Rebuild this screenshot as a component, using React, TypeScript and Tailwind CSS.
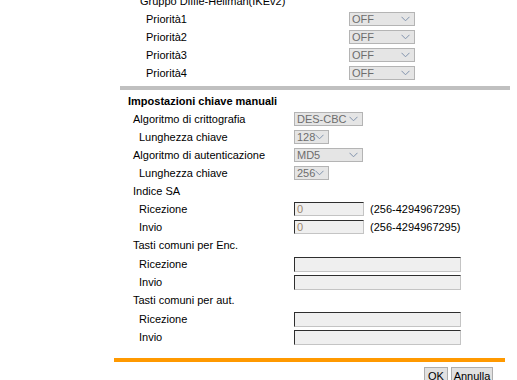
import React from "react";

const Chevron = () => (
  <svg width="9" height="6" viewBox="0 0 9 6" className="shrink-0">
    <polyline points="0.5,0.8 4.5,4.8 8.5,0.8" fill="none" stroke="#8193ad" strokeWidth="1" />
  </svg>
);

const Sel = ({ value, w }: { value: string; w: string }) => (
  <div
    className={`flex h-[14px] items-center justify-between border border-[#b4b4b4] bg-[#e5e5e5] pl-[2px] pr-[4px] leading-none text-[#6d6d6d] ${w}`}
  >
    <span>{value}</span>
    <Chevron />
  </div>
);

const Field = ({ value, w, h }: { value?: string; w: string; h: string }) => (
  <div
    className={`flex items-center border border-t-[#2e2e2e] border-l-[#2e2e2e] border-r-[#c4c4c4] border-b-[#c4c4c4] bg-[#efefef] pl-[2px] leading-none text-[#9c8670] ${w} ${h}`}
  >
    {value}
  </div>
);

const prio = ["Priorità1", "Priorità2", "Priorità3", "Priorità4"];

export default function App() {
  return (
    <div
      className="relative h-[380px] w-[517px] overflow-hidden bg-white text-[11px] text-black"
      style={{ fontFamily: '"Liberation Sans", Arial, sans-serif' }}
    >
      {/* IKEv2 group priorities */}
      <div className="ml-[120px] w-[390px]">
        <div className="mt-[-8px] flex h-[18px] items-center pl-[20px]">Gruppo Diffie-Hellman(IKEv2)</div>
        {prio.map((p) => (
          <div key={p} className="flex h-[18px] items-center">
            <div className="w-[229px] pl-[26px]">{p}</div>
            <Sel value="OFF" w="w-[66px]" />
          </div>
        ))}
        <div className="mt-[4px] h-[4px] bg-[#c0c0c0]" />

        {/* manual keys */}
        <div className="mt-[2px] flex h-[18px] items-center pl-[8px] font-bold">Impostazioni chiave manuali</div>

        <div className="flex h-[18px] items-center">
          <div className="w-[174px] pl-[13px]">Algoritmo di crittografia</div>
          <Sel value="DES-CBC" w="w-[69px]" />
        </div>
        <div className="flex h-[18px] items-center">
          <div className="w-[174px] pl-[19px]">Lunghezza chiave</div>
          <Sel value="128" w="w-[35px]" />
        </div>
        <div className="flex h-[18px] items-center">
          <div className="w-[174px] pl-[13px]">Algoritmo di autenticazione</div>
          <Sel value="MD5" w="w-[69px]" />
        </div>
        <div className="flex h-[18px] items-center">
          <div className="w-[174px] pl-[19px]">Lunghezza chiave</div>
          <Sel value="256" w="w-[35px]" />
        </div>

        <div className="flex h-[18px] items-center pl-[13px]">Indice SA</div>
        <div className="flex h-[18px] items-center">
          <div className="w-[174px] pl-[19px]">Ricezione</div>
          <Field value="0" w="w-[70px]" h="h-[14px]" />
          <span className="ml-[6px]">(256-4294967295)</span>
        </div>
        <div className="flex h-[18px] items-center">
          <div className="w-[174px] pl-[19px]">Invio</div>
          <Field value="0" w="w-[70px]" h="h-[14px]" />
          <span className="ml-[6px]">(256-4294967295)</span>
        </div>

        <div className="flex h-[19px] items-center pl-[13px]">Tasti comuni per Enc.</div>
        <div className="flex h-[18px] items-center">
          <div className="w-[174px] pl-[19px]">Ricezione</div>
          <Field w="w-[167px]" h="h-[15px]" />
        </div>
        <div className="flex h-[18px] items-center">
          <div className="w-[174px] pl-[19px]">Invio</div>
          <Field w="w-[167px]" h="h-[15px]" />
        </div>

        <div className="flex h-[19px] items-center pl-[13px]">Tasti comuni per aut.</div>
        <div className="flex h-[18px] items-center">
          <div className="w-[174px] pl-[19px]">Ricezione</div>
          <Field w="w-[167px]" h="h-[15px]" />
        </div>
        <div className="flex h-[18px] items-center">
          <div className="w-[174px] pl-[19px]">Invio</div>
          <Field w="w-[167px]" h="h-[15px]" />
        </div>
      </div>

      <div className="ml-[114px] mt-[12px] h-[4px] w-[391px] bg-[#ff9900]" />

      <div className="mt-[5px] flex justify-end gap-[3px] pr-[24px]">
        <button className="flex h-[18px] w-[24px] items-center justify-center border border-[#adadad] bg-[#e1e1e1] leading-none text-black">
          OK
        </button>
        <button className="flex h-[18px] w-[42px] items-center justify-center border border-[#adadad] bg-[#e1e1e1] leading-none text-black">
          Annulla
        </button>
      </div>
    </div>
  );
}
